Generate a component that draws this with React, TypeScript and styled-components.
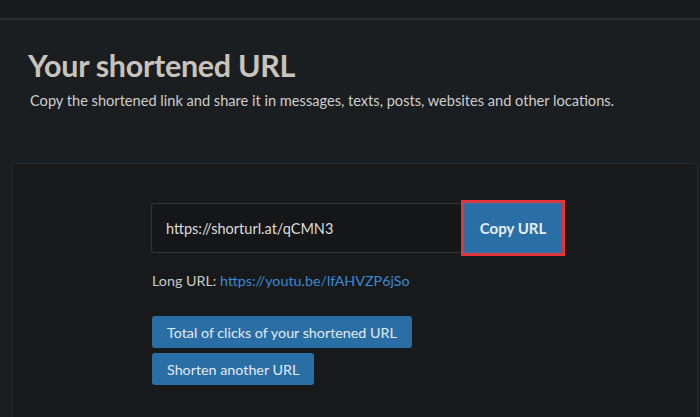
import styled, { createGlobalStyle } from "styled-components";
import { FC } from "react";

const GlobalStyle = createGlobalStyle`
  html, body {
    margin: 0;
    padding: 0;
    background: #1b1e20;
    font-family: Lato, "Open Sans", sans-serif;
    overflow: hidden;
  }
`;

const App: FC = () => {
  return (
    <Page>
      <GlobalStyle />
      <TopBar />
      <Header>
        <Title>Your shortened URL</Title>
        <Subtitle>
          Copy the shortened link and share it in messages, texts, posts, websites and other locations.
        </Subtitle>
      </Header>
      <Card>
        <Content>
          <CopyRow>
            <UrlInput readOnly value="https://shorturl.at/qCMN3" />
            <Highlight>
              <CopyButton>Copy URL</CopyButton>
            </Highlight>
          </CopyRow>
          <LongUrl>
            Long URL: <Link href="#">https://youtu.be/lfAHVZP6jSo</Link>
          </LongUrl>
          <Actions>
            <ActionButton>Total of clicks of your shortened URL</ActionButton>
            <ActionButton>Shorten another URL</ActionButton>
          </Actions>
        </Content>
      </Card>
    </Page>
  );
};

export default App;

const Page = styled.div`
  width: 700px;
  height: 417px;
  display: flex;
  flex-direction: column;
  background: #1b1e20;
`;

const TopBar = styled.div`
  height: 18px;
  background: #181b1d;
  border-bottom: 2px solid #283030;
  flex-shrink: 0;
`;

const Header = styled.div`
  padding: 25px 0 0 28px;
  height: 143px;
  box-sizing: border-box;
  flex-shrink: 0;
`;

const Title = styled.h1`
  margin: 0;
  font-size: 30.5px;
  font-weight: 700;
  color: #c8c3bc;
  letter-spacing: -0.3px;
  line-height: 40px;
`;

const Subtitle = styled.p`
  margin: 7px 0 0 2px;
  font-size: 14.6px;
  color: #cdcdcd;
  line-height: 18px;
`;

const Card = styled.div`
  margin: 0 2px 0 12px;
  flex: 1;
  background: #18191b;
  border: 1px solid #262a2c;
  border-bottom: none;
  border-radius: 5px 5px 0 0;
`;

const Content = styled.div`
  padding: 36px 0 0 138px;
  display: flex;
  flex-direction: column;
`;

const CopyRow = styled.div`
  display: flex;
  align-items: center;
`;

const UrlInput = styled.input`
  width: 310px;
  height: 50px;
  box-sizing: border-box;
  background: #151618;
  border: 1px solid #303437;
  border-right: none;
  border-radius: 3px 0 0 3px;
  color: #dcdcdc;
  font-family: Lato, sans-serif;
  font-size: 14.5px;
  padding: 0 14px;
  outline: none;
`;

const Highlight = styled.div`
  border: 3px solid #e0353b;
  padding: 0;
  display: flex;
`;

const CopyButton = styled.button`
  width: 98px;
  height: 50px;
  border: 0;
  background: #2a6ea6;
  color: #e6eef5;
  font-family: Lato, sans-serif;
  font-weight: 700;
  font-size: 15px;
  cursor: pointer;
`;

const LongUrl = styled.div`
  margin-top: 16px;
  margin-left: 1px;
  font-size: 14.3px;
  color: #c9c9c9;
`;

const Link = styled.a`
  color: #3b8ad4;
  text-decoration: none;
`;

const Actions = styled.div`
  margin-top: 27px;
  margin-left: 1px;
  display: flex;
  flex-direction: column;
  align-items: flex-start;
  gap: 5px;
`;

const ActionButton = styled.button`
  height: 32px;
  padding: 0 15px;
  border: 0;
  border-radius: 3px;
  background: #2a6ea6;
  color: #e3ebf2;
  font-family: Lato, sans-serif;
  font-size: 14.3px;
  cursor: pointer;
`;
